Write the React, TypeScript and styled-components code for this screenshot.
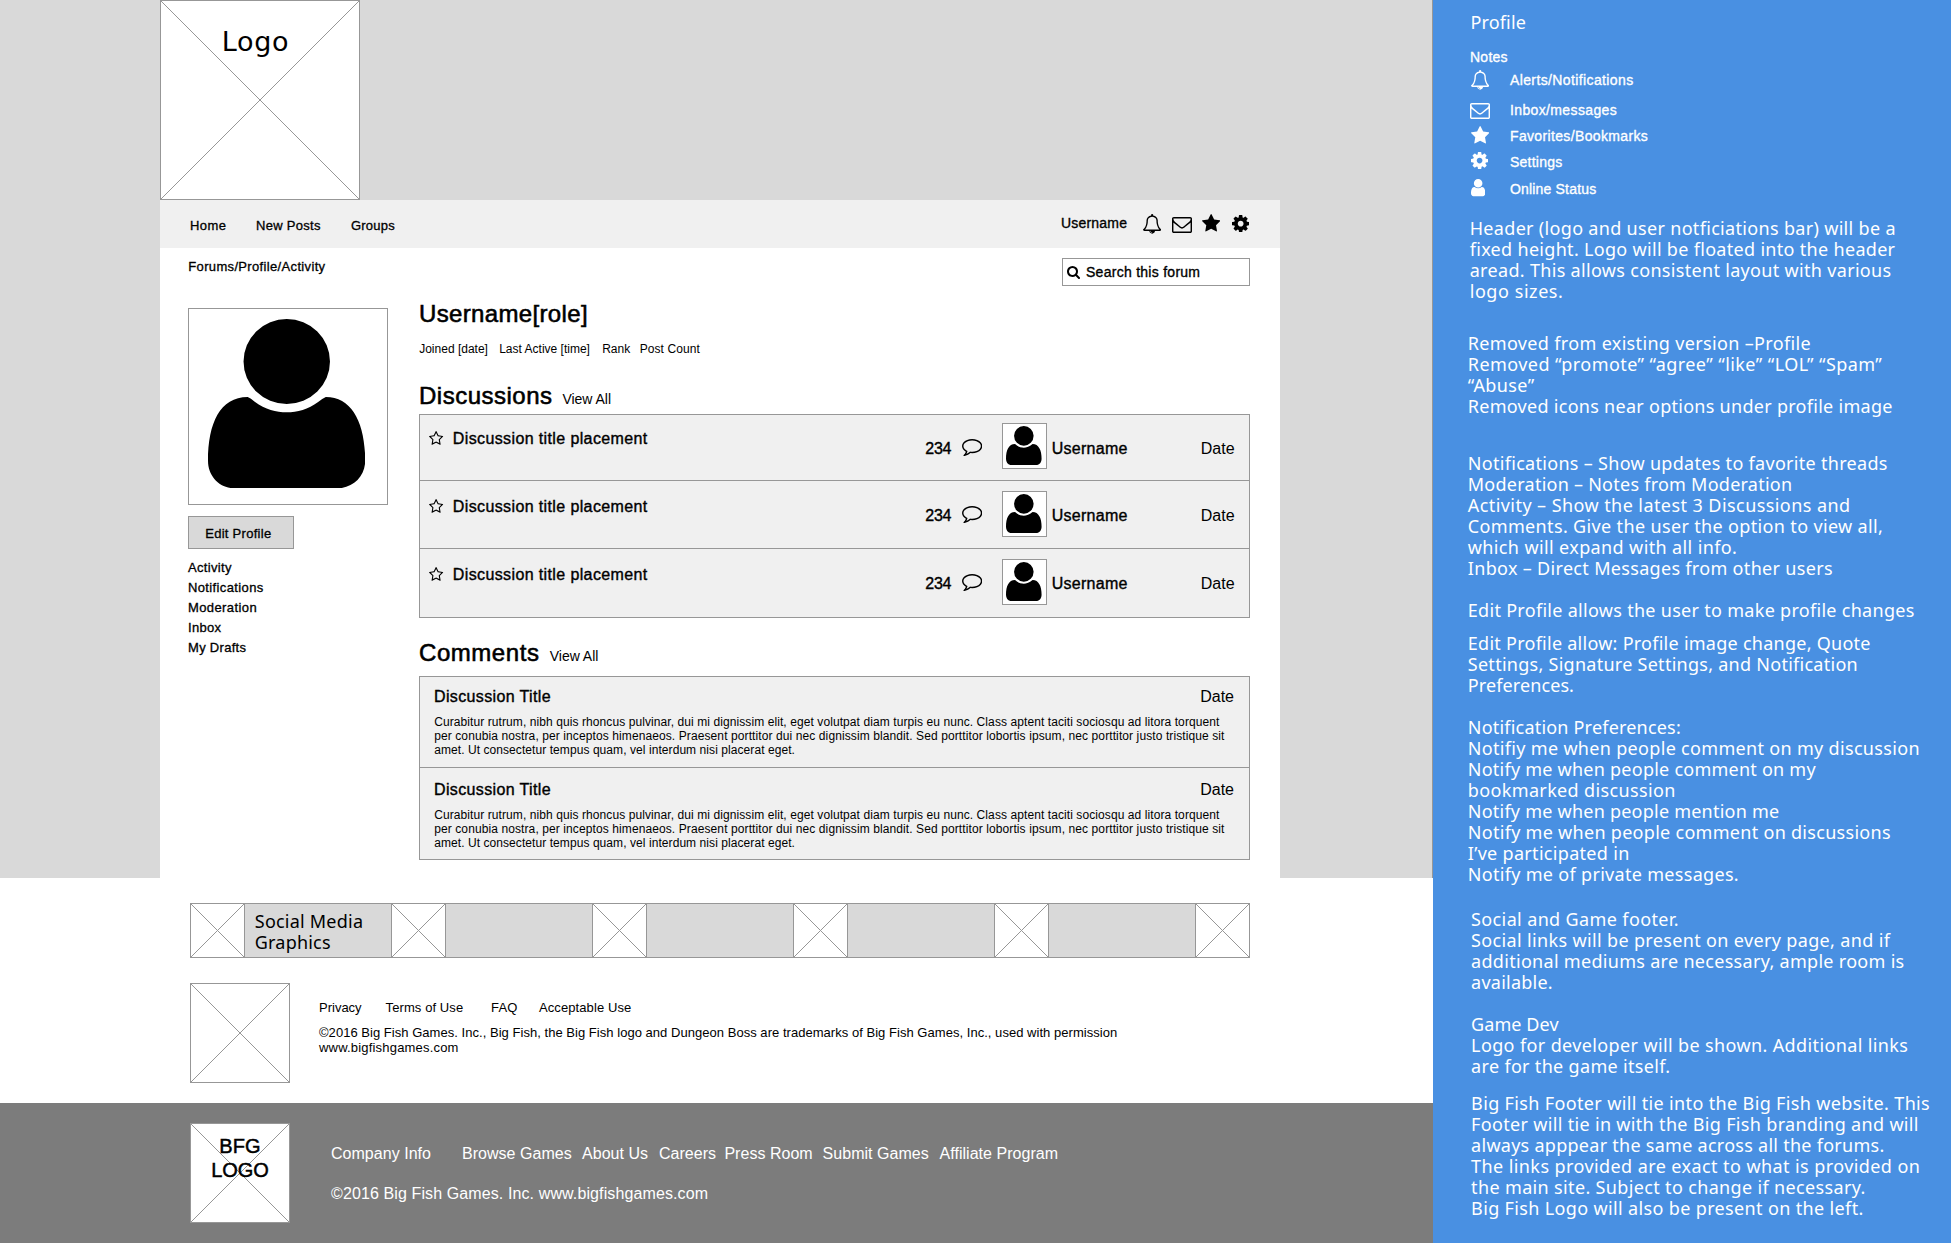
import React from 'react';
import styled, { createGlobalStyle, css } from 'styled-components';

const GREY = '#d9d9d9';
const LINE = '#979797';
const PANEL = '#f0f0f0';
const BLUE = '#4990e2';
const SLATE = '#7c7c7c';

const GlobalStyle = createGlobalStyle`
  body { margin: 0; background: #fff; color: #000; }
  *, *::before, *::after { box-sizing: border-box; }
`;

/* ---------- type ---------- */

const lineHeights: Record<number, number> = { 12: 14, 13: 15, 14: 16, 16: 17, 20: 24, 24: 27 };

const Label = styled.span<{ $size: number; $medium?: boolean; $track?: number }>`
  display: block;
  font-family: 'Liberation Sans', Arial, sans-serif;
  font-size: ${(p) => p.$size}px;
  line-height: ${(p) => lineHeights[p.$size]}px;
  letter-spacing: ${(p) => p.$track ?? 0}px;
  white-space: pre;
  ${(p) => p.$medium && css`-webkit-text-stroke: 0.024em currentColor;`}
`;

const NoteLine = styled.span<{ $track: number }>`
  display: block;
  font-family: 'Noto Sans', sans-serif;
  font-size: 18px;
  line-height: 21px;
  letter-spacing: ${(p) => p.$track}px;
  white-space: pre;
`;

/* ---------- icons ---------- */

const STAR_EDGE =
  'q0 22-26 48l-363 354 86 500q1 7 1 20 0 21-10.5 35.5t-30.5 14.5q-19 0-40-12l-449-236-449 236q-22 12-40 12-21 0-31.5-14.5t-10.5-35.5q0-6 2-20l86-500-364-354q-25-27-25-48 0-37 56-46l502-73 225-455q19-41 49-41t49 41l225 455 502 73q56 9 56 46z';

const icons = {
  bell: {
    box: '64 0 1664 1792',
    d: 'M912 1696q0-16-16-16-59 0-101.5-42.5t-42.5-101.5q0-16-16-16t-16 16q0 73 51.5 124.5t124.5 51.5q16 0 16-16zm-666-288h1300q-266-300-266-832 0-51-24-105t-69-103-121.5-80.5-169.5-31.5-169.5 31.5-121.5 80.5-69 103-24 105q0 532-266 832zm1482 0q0 52-38 90t-90 38h-448q0 106-75 181t-181 75-181-75-75-181h-448q-52 0-90-38t-38-90q50-42 91-88t85-119.5 74.5-158.5 50-206 19.5-260q0-152 117-282.5t307-158.5q-8-19-8-39 0-40 28-68t68-28 68 28 28 68q0 20-8 39 190 28 307 158.5t117 282.5q0 139 19.5 260t50 206 74.5 158.5 85 119.5 91 88z',
  },
  mail: {
    box: '0 256 1792 1408',
    d: 'M1664 1504v-768q-32 36-69 66-268 206-426 338-51 43-83 67t-86.5 48.5-102.5 24.5h-2q-48 0-102.5-24.5t-86.5-48.5-83-67q-158-132-426-338-37-30-69-66v768q0 13 9.5 22.5t22.5 9.5h1472q13 0 22.5-9.5t9.5-22.5zm0-1051v-24.5l-.5-13-3-12.5-5.5-9-9-7.5-14-2.5h-1472q-13 0-22.5 9.5t-9.5 22.5q0 168 147 284 193 152 401 317 6 5 35 29.5t46 37.5 44.5 31.5 50.5 27.5 43 9h2q20 0 43-9t50.5-27.5 44.5-31.5 46-37.5 35-29.5q208-165 401-317 54-43 100.5-115.5t46.5-131.5zm128-37v1088q0 66-47 113t-113 47h-1472q-66 0-113-47t-47-113v-1088q0-66 47-113t113-47h1472q66 0 113 47t47 113z',
  },
  star: { box: '64 32 1664 1587', d: 'M1728 647' + STAR_EDGE },
  starOutline: {
    box: '64 32 1664 1587',
    d: 'M1201 1004l306-297-422-62-189-382-189 382-422 62 306 297-73 421 378-199 377 199zM1728 647' + STAR_EDGE,
  },
  gear: {
    box: '128 128 1536 1536',
    d: 'M1152 896q0-106-75-181t-181-75-181 75-75 181 75 181 181 75 181-75 75-181zm512-109v222q0 12-8 23t-20 13l-185 28q-19 54-39 91 35 50 107 138 10 12 10 25t-9 23q-27 37-99 108t-94 71q-12 0-26-9l-138-108q-44 23-91 38-16 136-29 186-7 28-36 28h-222q-14 0-24.5-8.5t-11.5-21.5l-28-184q-49-16-90-37l-141 107q-10 9-25 9-14 0-25-11-126-114-165-168-7-10-7-23 0-12 8-23 15-21 51-66.5t54-70.5q-27-50-41-99l-183-27q-13-2-21-12.5t-8-23.5v-222q0-12 8-23t19-13l186-28q14-46 39-92-40-57-107-138-10-12-10-24 0-10 9-23 26-36 98.5-107.5t94.5-71.5q13 0 26 10l138 107q44-23 91-38 16-136 29-186 7-28 36-28h222q14 0 24.5 8.5t11.5 21.5l28 184q49 16 90 37l142-107q9-9 24-9 13 0 25 10 129 119 165 170 7 8 7 22 0 12-8 23-15 21-51 66.5t-54 70.5q26 50 41 98l183 28q13 2 21 12.5t8 23.5z',
  },
  search: {
    box: '64 128 1664 1664',
    d: 'M1216 832q0-185-131.5-316.5t-316.5-131.5-316.5 131.5-131.5 316.5 131.5 316.5 316.5 131.5 316.5-131.5 131.5-316.5zm512 832q0 52-38 90t-90 38q-54 0-90-38l-343-342q-179 124-399 124-143 0-273.5-55.5t-225-150-150-225-55.5-273.5 55.5-273.5 150-225 225-150 273.5-55.5 273.5 55.5 225 150 150 225 55.5 273.5q0 220-124 399l343 343q37 37 37 90z',
  },
  comment: {
    box: '0 256 1792 1536',
    d: 'M896 384q-204 0-381.5 69.5t-282 187.5-104.5 255q0 112 71.5 213.5t201.5 175.5l87 50-27 96q-24 91-70 172 152-63 275-171l43-38 57 6q69 8 130 8 204 0 381.5-69.5t282-187.5 104.5-255-104.5-255-282-187.5-381.5-69.5zm896 512q0 174-120 321.5t-326 233-450 85.5q-70 0-145-8-198 175-460 242-49 14-114 22h-5q-15 0-27-10.5t-16-27.5v-1q-3-4-.5-12t2-10 4.5-9.5l6-9 7-8.5 8-9q7-8 31-34.5t34.5-38 31-39.5 32.5-51 27-59 26-76q-157-89-247.5-220t-90.5-281q0-174 120-321.5t326-233 450-85.5 450 85.5 326 233 120 321.5z',
  },
  user: {
    box: '256 128 1280 1536',
    d: 'M1536 1399q0 109-62.5 187t-150.5 78h-854q-88 0-150.5-78t-62.5-187q0-85 8.5-160.5t31.5-152 58.5-131 94-89 134.5-34.5q131 128 313 128t313-128q76 0 134.5 34.5t94 89 58.5 131 31.5 152 8.5 160.5zM1280 512q0 159-112.5 271.5t-271.5 112.5-271.5-112.5-112.5-271.5 112.5-271.5 271.5-112.5 271.5 112.5 112.5 271.5z',
  },
  person: {
    box: '84 57 471 508',
    d: 'M203 291Q212 295 224 305C256 328 288 337 320 337S384 328 414 306Q427 295 437 291C516 291 555 370 555 482C555 530 518 565 470 565H166C120 565 84 530 84 482C84 370 120 291 203 291ZM449.5 184.5a129.5 127.5 0 1 1-259 0a129.5 127.5 0 1 1 259 0z',
  },
};

const Svg = styled.svg<{ $top?: number; $left?: number }>`
  display: block;
  flex: none;
  fill: currentColor;
  margin-top: ${(p) => p.$top ?? 0}px;
  margin-left: ${(p) => p.$left ?? 0}px;
`;

function Icon({ name, w, h, top, left }: { name: keyof typeof icons; w: number; h: number; top?: number; left?: number }) {
  return (
    <Svg width={w} height={h} viewBox={icons[name].box} preserveAspectRatio="none" $top={top} $left={left} aria-hidden>
      <path d={icons[name].d} />
    </Svg>
  );
}

/* ---------- crossed placeholder ---------- */

const Frame = styled.div<{ $w: number; $h: number; $pad?: number }>`
  position: relative;
  flex: none;
  width: ${(p) => p.$w}px;
  height: ${(p) => p.$h}px;
  padding-top: ${(p) => p.$pad ?? 0}px;
  border: 1px solid ${LINE};
  background: #fff;
`;

const Cross = styled.svg`
  position: absolute;
  inset: 0;
  width: 100%;
  height: 100%;
  stroke: ${LINE};
  stroke-width: 1;
`;

const FrameText = styled.div<{ $left?: number }>`
  position: relative;
  display: flex;
  flex-direction: column;
  align-items: ${(p) => (p.$left === undefined ? 'center' : 'flex-start')};
  padding-left: ${(p) => p.$left ?? 0}px;
`;

const LogoWord = styled.span`
  font-family: 'DejaVu Sans', sans-serif;
  font-size: 27px;
  line-height: 32px;
  letter-spacing: 0.7px;
`;

function Placeholder({ w, h, pad, children }: { w: number; h: number; pad?: number; children?: React.ReactNode }) {
  return (
    <Frame $w={w} $h={h} $pad={pad}>
      <Cross>
        <line x1="0" y1="0" x2="100%" y2="100%" />
        <line x1="100%" y1="0" x2="0" y2="100%" />
      </Cross>
      {children}
    </Frame>
  );
}

/* ---------- page ---------- */

const Page = styled.div`
  display: grid;
  grid-template-columns: 1433px 518px;
  width: 1951px;
  height: 1243px;
  overflow: hidden;
`;

const Stage = styled.div`
  height: 878px;
  padding-left: 160px;
  background: ${GREY};
  border-right: 1px solid ${LINE};
`;

const Sheet = styled.div`
  display: flex;
  flex-direction: column;
  width: 1120px;
  height: 678px;
  background: #fff;
`;

const NavBar = styled.nav`
  display: grid;
  grid-template-columns: 66px 95px 710px 81.7px 30px 29px 30px 1fr;
  height: 48px;
  padding-left: 30px;
  background: ${PANEL};
`;

const NavItem = styled.div<{ $top: number }>`
  padding-top: ${(p) => p.$top}px;
`;

const Toolbar = styled.div`
  display: flex;
  justify-content: space-between;
  padding: 10px 30px 0 28.3px;
  height: 38px;
`;

const Crumb = styled.div`
  padding-top: 1px;
`;

const SearchBox = styled.div`
  display: flex;
  gap: 6px;
  width: 188px;
  height: 28px;
  padding: 5px 0 0 4px;
  border: 1px solid ${LINE};
`;

const Columns = styled.div`
  display: grid;
  grid-template-columns: 231px 831px;
  padding-left: 28px;
`;

const Sidebar = styled.aside`
  padding-top: 22px;
`;

const Photo = styled.div`
  width: 200px;
  height: 197px;
  padding: 10px 0 0 19px;
  border: 1px solid ${LINE};
`;

const EditButton = styled.button`
  display: flex;
  align-items: flex-start;
  width: 106px;
  height: 33px;
  margin: 11px 0 11px;
  padding: 9px 0 0 16.2px;
  border: 1px solid ${LINE};
  border-radius: 0;
  background: ${GREY};
  color: #000;
  text-align: left;
`;

const SideLinks = styled.div`
  display: flex;
  flex-direction: column;
  gap: 5px;
`;

const Main = styled.main`
  padding-top: 14px;
`;

const Meta = styled.div`
  display: grid;
  grid-template-columns: 80px 103px 37.5px 1fr;
  margin: 15px 0 26px 0.2px;
`;

const SectionHead = styled.div<{ $before?: number; $after: number; $gap: number }>`
  display: flex;
  align-items: baseline;
  gap: ${(p) => p.$gap}px;
  margin: ${(p) => p.$before ?? 0}px 0 ${(p) => p.$after}px 0;
`;

const List = styled.div`
  border: 1px solid ${LINE};
  border-top: 0;
  background: ${PANEL};
`;

const DiscussionRow = styled.div<{ $first: boolean; $h: number }>`
  display: grid;
  grid-template-columns: 22.8px 472.5px 36.7px 40px 49.8px 149px 1fr;
  height: ${(p) => p.$h}px;
  padding: ${(p) => (p.$first ? 8 : 10)}px 0 0 10px;
  border-top: 1px solid ${LINE};
`;

const Cell = styled.div<{ $top: number }>`
  padding-top: ${(p) => p.$top}px;
`;

const Avatar = styled.div`
  width: 45px;
  height: 46px;
  padding: 2px 0 0 3.5px;
  border: 1px solid ${LINE};
  background: #fff;
`;

const CommentCard = styled.article<{ $first: boolean; $h: number }>`
  height: ${(p) => p.$h}px;
  padding: ${(p) => (p.$first ? 11 : 13)}px 15px 0 14px;
  border-top: 1px solid ${LINE};
`;

const CommentHead = styled.div`
  display: flex;
  justify-content: space-between;
  margin-bottom: 10px;
`;

const CommentText = styled.div`
  padding-left: 0.2px;
`;

/* ---------- footers ---------- */

const GameFooter = styled.footer`
  height: 225px;
  padding: 25px 183px 0 190px;
  background: #fff;
`;

const SocialBar = styled.div`
  display: flex;
  height: 55px;
  margin-bottom: 25px;
  background: ${GREY};
`;

const SocialGap = styled.div`
  flex: none;
  width: 146px;
  padding: 6.5px 0 0 9.8px;
  border: solid ${LINE};
  border-width: 1px 0;
`;

const GameRow = styled.div`
  display: flex;
  gap: 29px;
`;

const GameInfo = styled.div`
  padding-top: 17px;
`;

const GameLinks = styled.div`
  display: grid;
  grid-template-columns: 66.6px 105.5px 47.9px 1fr;
  margin-bottom: 10px;
`;

const BrandFooter = styled.footer`
  display: flex;
  gap: 41px;
  height: 140px;
  padding: 20px 0 0 190px;
  background: ${SLATE};
  color: #fff;
`;

const BrandLinks = styled.div`
  display: grid;
  grid-template-columns: 131px 120px 77px 65.4px 98.2px 117px 1fr;
  margin: 22px 0 23px;
`;

const Dark = styled.div`
  color: #000;
`;

/* ---------- notes ---------- */

const Notes = styled.aside`
  padding: 11.5px 0 0 34.8px;
  background: ${BLUE};
  color: #fff;
`;

const PanelTitle = styled.div`
  padding-left: 2.8px;
  margin-bottom: 16.5px;
`;

const Legend = styled.div`
  padding-left: 2.2px;
`;

const LegendRow = styled.div<{ $h: number }>`
  display: grid;
  grid-template-columns: 40px 1fr;
  height: ${(p) => p.$h}px;
`;

const NoteBlock = styled.div<{ $gap: number; $indent: number }>`
  margin-top: ${(p) => p.$gap}px;
  padding-left: ${(p) => p.$indent}px;
`;

const LegendTitle = styled.div`
  height: 21px;
`;

/* ---------- data ---------- */

const comment: [string, number][] = [
  ['Curabitur rutrum, nibh quis rhoncus pulvinar, dui mi dignissim elit, eget volutpat diam turpis eu nunc. Class aptent taciti sociosqu ad litora torquent', 0.085],
  ['per conubia nostra, per inceptos himenaeos. Praesent porttitor dui nec dignissim blandit. Sed porttitor lobortis ipsum, nec porttitor justo tristique sit', 0.1],
  ['amet. Ut consectetur tempus quam, vel interdum nisi placerat eget.', 0.07],
];

const sideLinks: [string, number][] = [
  ['Activity', 0.33],
  ['Notifications', 0.37],
  ['Moderation', 0.4],
  ['Inbox', 0.3],
  ['My Drafts', 0.3],
];

const legend: { icon: keyof typeof icons; w: number; h: number; left: number; top: number; row: number; pad: number; text: string; track: number }[] = [
  { icon: 'bell', w: 18.3, h: 19.7, left: 0.9, top: 0, row: 32, pad: 2, text: 'Alerts/Notifications', track: 0.38 },
  { icon: 'mail', w: 20, h: 16, left: 0.1, top: 0.5, row: 24, pad: 0, text: 'Inbox/messages', track: 0.37 },
  { icon: 'star', w: 18.3, h: 17.5, left: 1, top: 0.4, row: 26, pad: 2, text: 'Favorites/Bookmarks', track: 0.35 },
  { icon: 'gear', w: 17.2, h: 17.2, left: 1, top: 0.2, row: 27, pad: 2, text: 'Settings', track: 0.24 },
  { icon: 'user', w: 14.3, h: 17.2, left: 1, top: 0.4, row: 18, pad: 2, text: 'Online Status', track: 0.18 },
];

const notes: { gap: number; indent: number; lines: [string, number][] }[] = [
  {
    gap: 20.5,
    indent: 1.9,
    lines: [
      ['Header (logo and user notficiations bar) will be a', 0.32],
      ['fixed height. Logo will be floated into the header', 0.31],
      ['aread. This allows consistent layout with various', 0.32],
      ['logo sizes.', 0.57],
    ],
  },
  {
    gap: 31,
    indent: 0,
    lines: [
      ['Removed from existing version –Profile', 0.34],
      ['Removed “promote” “agree” “like” “LOL” “Spam”', 0.43],
      ['“Abuse”', 0.4],
      ['Removed icons near options under profile image', 0.28],
    ],
  },
  {
    gap: 36,
    indent: 0,
    lines: [
      ['Notifications – Show updates to favorite threads', 0.3],
      ['Moderation – Notes from Moderation', 0.25],
      ['Activity – Show the latest 3 Discussions and', 0.43],
      ['Comments. Give the user the option to view all,', 0.35],
      ['which will expand with all info.', 0.38],
      ['Inbox – Direct Messages from other users', 0.32],
    ],
  },
  { gap: 21, indent: 0, lines: [['Edit Profile allows the user to make profile changes', 0.295]] },
  {
    gap: 12,
    indent: 0,
    lines: [
      ['Edit Profile allow: Profile image change, Quote', 0.26],
      ['Settings, Signature Settings, and Notification', 0.27],
      ['Preferences.', 0.1],
    ],
  },
  {
    gap: 21,
    indent: 0,
    lines: [
      ['Notification Preferences:', 0.2],
      ['Notifiy me when people comment on my discussion', 0.32],
      ['Notify me when people comment on my', 0.24],
      ['bookmarked discussion', 0.36],
      ['Notify me when people mention me', 0.23],
      ['Notify me when people comment on discussions', 0.29],
      ['I’ve participated in', 0.31],
      ['Notify me of private messages.', 0.31],
    ],
  },
  {
    gap: 24,
    indent: 3.3,
    lines: [
      ['Social and Game footer.', 0.37],
      ['Social links will be present on every page, and if', 0.35],
      ['additional mediums are necessary, ample room is', 0.3],
      ['available.', 0.24],
    ],
  },
  {
    gap: 21,
    indent: 3.3,
    lines: [
      ['Game Dev', 0.08],
      ['Logo for developer will be shown. Additional links', 0.375],
      ['are for the game itself.', 0.32],
    ],
  },
  {
    gap: 16,
    indent: 3.3,
    lines: [
      ['Big Fish Footer will tie into the Big Fish website. This', 0.355],
      ['Footer will tie in with the Big Fish branding and will', 0.325],
      ['always apppear the same across all the forums.', 0.27],
      ['The links provided are exact to what is provided on', 0.415],
      ['the main site. Subject to change if necessary.', 0.35],
      ['Big Fish Logo will also be present on the left.', 0.355],
    ],
  },
];

/* ---------- parts ---------- */

function Discussion({ first, height }: { first: boolean; height: number }) {
  const shift = first ? 1 : 0;
  return (
    <DiscussionRow $first={first} $h={height}>
      <Cell $top={8.2}><Icon name="starOutline" w={14.2} h={13.8} left={-0.6} /></Cell>
      <Cell $top={7}><Label $size={16} $medium $track={0.38}>Discussion title placement</Label></Cell>
      <Cell $top={16 + shift}><Label $size={16} $medium $track={-0.3}>234</Label></Cell>
      <Cell $top={15 + shift}><Icon name="comment" w={20.3} h={17} /></Cell>
      <Avatar><Icon name="person" w={35.6} h={39.3} /></Avatar>
      <Cell $top={16 + shift}><Label $size={16} $medium $track={0.26}>Username</Label></Cell>
      <Cell $top={16 + shift}><Label $size={16}>Date</Label></Cell>
    </DiscussionRow>
  );
}

function Comment({ first, height }: { first: boolean; height: number }) {
  return (
    <CommentCard $first={first} $h={height}>
      <CommentHead>
        <Label $size={16} $medium $track={0.36}>Discussion Title</Label>
        <Label $size={16}>Date</Label>
      </CommentHead>
      <CommentText>
        {comment.map(([text, track]) => (
          <Label key={text} $size={12} $track={track}>{text}</Label>
        ))}
      </CommentText>
    </CommentCard>
  );
}

export default function App() {
  return (
    <>
      <GlobalStyle />
      <Page>
        <div>
          <Stage>
            <Placeholder w={200} h={200} pad={25}>
              <FrameText $left={60.7}><LogoWord>Logo</LogoWord></FrameText>
            </Placeholder>
            <Sheet>
              <NavBar>
                <NavItem $top={18}><Label $size={13} $medium $track={0.4}>Home</Label></NavItem>
                <NavItem $top={18}><Label $size={13} $medium $track={0.3}>New Posts</Label></NavItem>
                <NavItem $top={18}><Label $size={13} $medium $track={0.2}>Groups</Label></NavItem>
                <NavItem $top={15}><Label $size={14} $medium $track={0.2}>Username</Label></NavItem>
                <NavItem $top={14}><Icon name="bell" w={18.3} h={19.7} /></NavItem>
                <NavItem $top={16.7}><Icon name="mail" w={20} h={16} left={-0.7} /></NavItem>
                <NavItem $top={14.3}><Icon name="star" w={18.3} h={17.5} left={0.3} /></NavItem>
                <NavItem $top={15}><Icon name="gear" w={17.3} h={17.3} left={0.3} /></NavItem>
              </NavBar>
              <Toolbar>
                <Crumb><Label $size={13} $medium $track={0.34}>Forums/Profile/Activity</Label></Crumb>
                <SearchBox>
                  <Icon name="search" w={13} h={13} top={2} />
                  <Label $size={14} $medium $track={0.27}>Search this forum</Label>
                </SearchBox>
              </Toolbar>
              <Columns>
                <Sidebar>
                  <Photo><Icon name="person" w={157.2} h={169.4} /></Photo>
                  <EditButton><Label $size={13} $medium $track={0.28}>Edit Profile</Label></EditButton>
                  <SideLinks>
                    {sideLinks.map(([text, track]) => (
                      <Label key={text} $size={13} $medium $track={track}>{text}</Label>
                    ))}
                  </SideLinks>
                </Sidebar>
                <Main>
                  <SectionHead $after={0} $gap={0}><Label $size={24} $medium $track={0.35}>Username[role]</Label></SectionHead>
                  <Meta>
                    <Label $size={12}>Joined [date]</Label>
                    <Label $size={12}>Last Active [time]</Label>
                    <Label $size={12}>Rank</Label>
                    <Label $size={12} $track={0.08}>Post Count</Label>
                  </Meta>
                  <SectionHead $after={5} $gap={9.9}>
                    <Label $size={24} $medium $track={0.5}>Discussions</Label>
                    <Label $size={14} $track={-0.02}>View All</Label>
                  </SectionHead>
                  <List>
                    <Discussion first height={66} />
                    <Discussion first={false} height={68} />
                    <Discussion first={false} height={69} />
                  </List>
                  <SectionHead $before={21} $after={10} $gap={10.3}>
                    <Label $size={24} $medium $track={0.55}>Comments</Label>
                    <Label $size={14} $track={-0.02}>View All</Label>
                  </SectionHead>
                  <List>
                    <Comment first height={91} />
                    <Comment first={false} height={92} />
                  </List>
                </Main>
              </Columns>
            </Sheet>
          </Stage>
          <GameFooter>
            <SocialBar>
              {[0, 1, 2, 3, 4].map((i) => (
                <React.Fragment key={i}>
                  <Placeholder w={55} h={55} />
                  <SocialGap>
                    {i === 0 && (
                      <>
                        <NoteLine $track={0.22}>Social Media</NoteLine>
                        <NoteLine $track={0.2}>Graphics</NoteLine>
                      </>
                    )}
                  </SocialGap>
                </React.Fragment>
              ))}
              <Placeholder w={55} h={55} />
            </SocialBar>
            <GameRow>
              <Placeholder w={100} h={100} />
              <GameInfo>
                <GameLinks>
                  <Label $size={13}>Privacy</Label>
                  <Label $size={13} $track={0.09}>Terms of Use</Label>
                  <Label $size={13} $track={0.15}>FAQ</Label>
                  <Label $size={13} $track={0.09}>Acceptable Use</Label>
                </GameLinks>
                <Label $size={13} $track={0.035}>
                  ©2016 Big Fish Games. Inc., Big Fish, the Big Fish logo and Dungeon Boss are trademarks of Big Fish Games, Inc., used with permission
                </Label>
                <Label $size={13} $track={0.19}>www.bigfishgames.com</Label>
              </GameInfo>
            </GameRow>
          </GameFooter>
          <BrandFooter>
            <Dark>
              <Placeholder w={100} h={100} pad={10}>
                <FrameText>
                  <Label $size={20} $medium $track={0.2}>BFG</Label>
                  <Label $size={20} $medium $track={-0.1}>LOGO</Label>
                </FrameText>
              </Placeholder>
            </Dark>
            <div>
              <BrandLinks>
                {['Company Info', 'Browse Games', 'About Us', 'Careers', 'Press Room', 'Submit Games', 'Affiliate Program'].map((t) => (
                  <Label key={t} $size={16} $track={0.03}>{t}</Label>
                ))}
              </BrandLinks>
              <Label $size={16} $track={0.11}>©2016 Big Fish Games. Inc. www.bigfishgames.com</Label>
            </div>
          </BrandFooter>
        </div>
        <Notes>
          <PanelTitle><NoteLine $track={0.12}>Profile</NoteLine></PanelTitle>
          <Legend>
            <LegendTitle><Label $size={14} $medium $track={0.25}>Notes</Label></LegendTitle>
            {legend.map((l) => (
              <LegendRow key={l.text} $h={l.row}>
                <Icon name={l.icon} w={l.w} h={l.h} left={l.left} top={l.top} />
                <Cell $top={l.pad}><Label $size={14} $medium $track={l.track}>{l.text}</Label></Cell>
              </LegendRow>
            ))}
          </Legend>
          {notes.map((n, i) => (
            <NoteBlock key={i} $gap={n.gap} $indent={n.indent}>
              {n.lines.map(([text, track]) => (
                <NoteLine key={text} $track={track}>{text}</NoteLine>
              ))}
            </NoteBlock>
          ))}
        </Notes>
      </Page>
    </>
  );
}
